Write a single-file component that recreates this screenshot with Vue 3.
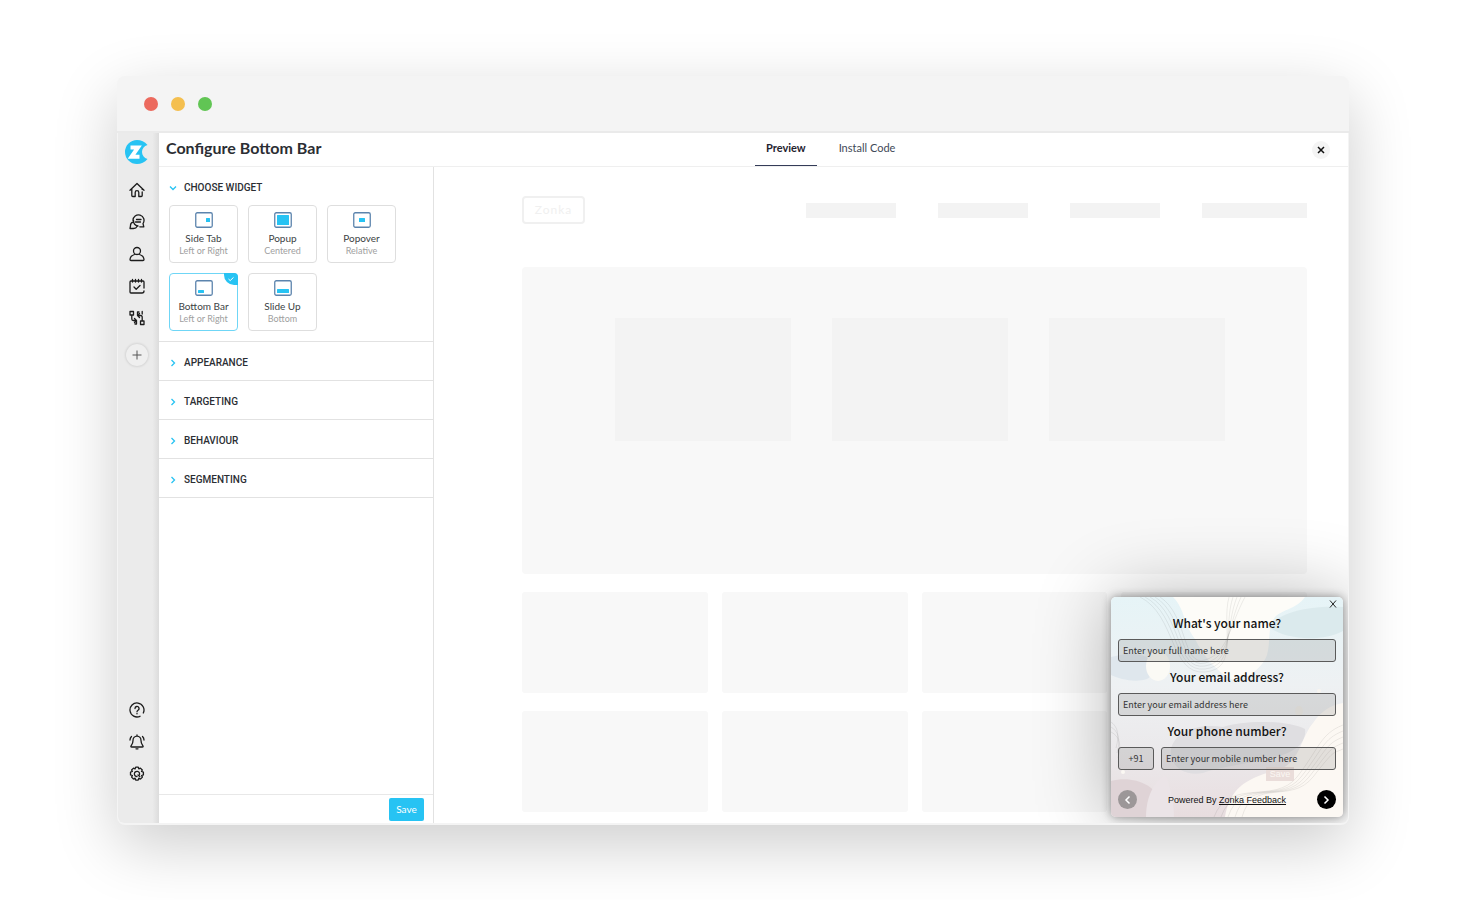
<script setup>
import { ref } from 'vue'

const widgets = [
  { name: 'Side Tab', note: 'Left or Right', box: { x: 11, y: 6, w: 4, h: 4 } },
  { name: 'Popup', note: 'Centered', box: { x: 3, y: 3, w: 12, h: 10 } },
  { name: 'Popover', note: 'Relative', box: { x: 6, y: 6, w: 6, h: 4 } },
  { name: 'Bottom Bar', note: 'Left or Right', box: { x: 3, y: 10, w: 6, h: 3 } },
  { name: 'Slide Up', note: 'Bottom', box: { x: 3, y: 9, w: 12, h: 4 } },
]
const selected = ref('Bottom Bar')
const sections = ['APPEARANCE', 'TARGETING', 'BEHAVIOUR', 'SEGMENTING']

const topIcons = [
  { label: 'Home', d: 'M1 8.200 8 1.500l7 6.700M2.800 7v6.500c0 .7.300 1 1 1h2.400v-4a1.800 1.800 0 0 1 3.600 0v4h2.400c.7 0 1-.3 1-1V10M13.200 7v.5' },
  { label: 'Responses', d: 'M4 6.500A5.500 5.500 0 1 1 14 9.500l.8 3.300h-4M7.500 5.500h4.500M6.500 8h5M4 8.200A3.700 3.700 0 0 0 1.500 12L1 14.500h3.500c1.800 0 3-.8 3.700-2.200M4.500 6.500c0 3 1.500 5 4.500 5.500' },
  { label: 'Contacts', d: 'M8 1.500a3.500 3.500 0 1 1 0 7 3.500 3.500 0 0 1 0-7M5.500 8.500C3 9.300 1.200 11 1 13.500c0 .7.300 1 1 1h12c.7 0 1-.3 1-1-.2-2.500-2-4.200-4.500-5' },
  { label: 'Tasks', d: 'M15 10V4c0-.8-.3-1-1-1H2c-.7 0-1 .3-1 1v10c0 .8.300 1 1 1h11c1.300 0 2-.7 2-2M3.500 1.500v2.500M6.500 1.500v2.500M9.500 1.500v2.500M12.500 1.500v2.500M5 9l2.200 2.200L11 7.500' },
  { label: 'Workflows', d: 'M1 1.500h3.500V5H1zM2.800 5v4c0 1 .5 1.500 1.500 1.500H7M5.500 8.500 7.500 10.500 5.500 12.500M7.500 10.500v3.500H6M11.500 11H15v3.500h-3.500zM13.200 11V7c0-1-.5-1.500-1.500-1.500H9M10.500 3.500 8.500 5.500l2 2M8.500 5.500V2H10M13.200 1.500V4' },
]
const bottomIcons = [
  { label: 'Help', d: 'M11 14.300A7 7 0 1 1 14.300 11M6 6.500a2 2 0 1 1 3 1.700c-.7.400-1 .7-1 1.500M8 11.500v.3' },
  { label: 'Notifications', d: 'M8 1v1M8 2.200c-2.500 0-4 2-4 4.300 0 3-1 4-2 5.500-.4.700 0 1 .7 1h10.600c.7 0 1.100-.3.700-1-1-1.500-2-2.500-2-5.500 0-2.300-1.500-4.300-4-4.300M7 14.800h2M2.500 2.500C1.500 3.500 1 4.500 1 6M13.500 2.500c1 1 1.500 2 1.500 3.500' },
  { label: 'Settings', d: 'M6.700 1.200h2.600l.5 1.700 1.600-.8 1.900 1.900-.8 1.500 1.900.6v2.800l-1.800.6.800 1.600-1.900 1.900-1.700-.8-.6 1.900H6.700l-.6-1.900-1.600.8-1.900-1.900.8-1.600-1.900-.6V6.100l1.900-.6-.8-1.500 1.900-1.900 1.600.8zM10.500 8.500A2.600 2.600 0 1 0 8 10.500M9 9l1.800 1.600' },
]
</script>

<template>
  <div class="page">
    <main class="window">
      <div class="chrome">
        <span class="dot red"></span>
        <span class="dot amber"></span>
        <span class="dot green"></span>
      </div>
      <div class="app">
        <nav class="rail" aria-label="Main">
          <svg class="logo" viewBox="0 0 24 24" aria-label="Zonka">
            <path d="M12 0c4 0 7.800 1.800 10.500 5-3.500 1-5.500 3.800-5.500 7s2 6 5.500 7c-2.700 3.200-6.500 5-10.500 5A12 12 0 0 1 12 0z" fill="#27c3f3" />
            <path d="M5.500 7.500h7.500L6.500 16.800h8" fill="none" stroke="#fff" stroke-width="4" />
          </svg>
          <div class="icons">
            <button v-for="i in topIcons" :key="i.label" class="icon" :aria-label="i.label">
              <svg viewBox="0 0 16 16"><path :d="i.d" /></svg>
            </button>
          </div>
          <button class="add" aria-label="Add">
            <svg viewBox="0 0 10 10"><path d="M5 0.500v9M0.500 5h9" /></svg>
          </button>
          <div class="icons low">
            <button v-for="i in bottomIcons" :key="i.label" class="icon" :aria-label="i.label">
              <svg viewBox="0 0 16 16"><path :d="i.d" /></svg>
            </button>
          </div>
        </nav>
        <div class="work">
          <header class="head">
            <h1>Configure Bottom Bar</h1>
            <div class="tabs">
              <button class="tab on">Preview</button>
              <button class="tab">Install Code</button>
            </div>
            <button class="close" aria-label="Close">
              <svg viewBox="0 0 8 8"><path d="M1 1l6 6M7 1L1 7" /></svg>
            </button>
          </header>
          <div class="split">
            <aside class="panel">
              <section class="choose">
                <button class="toggle open">
                  <svg viewBox="0 0 8 8"><path d="M1 2.500 4 5.500 7 2.500" /></svg>
                  CHOOSE WIDGET
                </button>
                <div class="cards">
                  <button
                    v-for="w in widgets"
                    :key="w.name"
                    class="card"
                    :class="{ picked: w.name === selected }"
                    @click="selected = w.name"
                  >
                    <svg class="glyph" viewBox="0 0 18 16">
                      <rect x="0.750" y="0.750" width="16.500" height="14.500" rx="1.500" fill="#fff" stroke="#5c84ad" stroke-width="1.300" />
                      <rect :x="w.box.x" :y="w.box.y" :width="w.box.w" :height="w.box.h" rx="0.500" fill="#27c3f3" />
                    </svg>
                    <span class="name">{{ w.name }}</span>
                    <span class="note">{{ w.note }}</span>
                    <span v-if="w.name === selected" class="badge">
                      <svg viewBox="0 0 8 8"><path d="M1.500 4 3.200 5.600 6.500 2.400" /></svg>
                    </span>
                  </button>
                </div>
              </section>
              <button v-for="s in sections" :key="s" class="toggle row">
                <svg viewBox="0 0 8 8"><path d="M2.500 1 5.500 4 2.500 7" /></svg>
                {{ s }}
              </button>
              <footer class="foot"><button class="save">Save</button></footer>
            </aside>
            <section class="preview">
              <div class="site-head">
                <span class="site-logo">Zonka</span>
                <div class="links"><i></i><i></i><i></i><i class="wide"></i></div>
              </div>
              <div class="hero"><i></i><i></i><i></i></div>
              <div class="tiles"><i v-for="n in 8" :key="n"></i></div>
            </section>
          </div>
        </div>
        <form class="survey" @submit.prevent>
          <svg class="art" viewBox="0 0 232 220" preserveAspectRatio="none" aria-hidden="true">
            <defs>
              <linearGradient id="wash" x1="0" y1="0" x2="0" y2="1">
                <stop offset="0" stop-color="#e6f4f7" />
                <stop offset="0.400" stop-color="#eef1f3" />
                <stop offset="0.700" stop-color="#ebe9eb" />
                <stop offset="1" stop-color="#e8dddf" />
              </linearGradient>
            </defs>
            <rect width="232" height="220" fill="url(#wash)" />
            <path d="M0 60c10-2 20-6 36 0 6 8 8 18 0 22C24 86 8 82 0 78z" fill="#dfe7ed" />
            <path d="M62 0c12 12 10 26 22 42 10 20 22 32 36 40 12 2 30-8 36-24 4-14 0-28 8-38 8-8 22-8 30-20z" fill="#fdfcf8" />
            <path d="M158 30c8-14 40-22 74-20v24c-22 12-60 8-74-4z" fill="#dbeaed" />
            <ellipse cx="47" cy="69" rx="12" ry="15" fill="#fbfaf5" />
            <path d="M60 152c4-16 24-26 52-22 24-8 66-6 82 2 2 16-14 26-40 30-24 6-46 8-62 14-22 4-34-10-32-24z" fill="#dfdee1" />
            <path d="M0 184c22-6 44 4 50 20l2 16H0z" fill="#dfd3d6" />
            <path d="M35 220c0-20 8-36 20-42 4 12 8 28 8 42z" fill="#ebe4e7" />
            <path d="M114 220c4-24 16-36 42-44 34-4 32-34 46-50 8-12 18-18 30-20v114z" fill="#fcf8f3" />
            <ellipse cx="188" cy="114" rx="4" ry="5" fill="#efede8" />
            <circle cx="208" cy="94" r="2" fill="#f8f5f0" />
            <circle cx="12" cy="175" r="2" fill="#fbf8f3" />
            <g fill="none" stroke="#000" stroke-opacity="0.120" stroke-width="0.600">
              <path v-for="k in 5" :key="'a' + k" :d="`M${24 + k * 5} 0C${62 + k * 3} 18 ${56 + k * 3} ${80 - k * 2} 94 ${78 - k * 3}S${108 + k * 2} 30 ${114 + k * 4} 0`" />
              <path v-for="k in 5" :key="'b' + k" :d="`M${96 + k * 7} 220C${112 + k * 6} 180 ${160 + k * 4} 208 ${182 + k * 4} 180S${206 + k * 3} ${132 + k * 5} 232 ${122 + k * 6}`" />
              <path v-for="k in 3" :key="'c' + k" :d="`M0 ${120 + k * 5}c${5 + k} 4 ${8 + k} 12 ${4 + k} 26`" />
            </g>
          </svg>
          <span class="ghost">Save</span>
          <button type="button" class="dismiss" aria-label="Close survey">
            <svg viewBox="0 0 8 8"><path d="M1 0.500l6 7M7 0.500l-6 7" /></svg>
          </button>
          <label for="full-name">What's your name?</label>
          <input id="full-name" type="text" placeholder="Enter your full name here" />
          <label for="email">Your email address?</label>
          <input id="email" type="email" placeholder="Enter your email address here" />
          <label for="phone">Your phone number?</label>
          <div class="phone">
            <input class="code" type="text" value="+91" aria-label="Country code" />
            <input id="phone" type="tel" placeholder="Enter your mobile number here" />
          </div>
          <div class="pager">
            <button type="button" class="go back" aria-label="Previous">
              <svg viewBox="0 0 10 10"><path d="M6.500 1.500 3 5l3.500 3.500" /></svg>
            </button>
            <p>Powered By <a href="#">Zonka Feedback</a></p>
            <button type="submit" class="go" aria-label="Next">
              <svg viewBox="0 0 10 10"><path d="M3.500 1.500 7 5 3.500 8.500" /></svg>
            </button>
          </div>
        </form>
      </div>
    </main>
  </div>
</template>

<style>
body {
  margin: 0;
  background: #fff;
}
</style>

<style scoped>
* {
  box-sizing: border-box;
}
button {
  border: 0;
  padding: 0;
  margin: 0;
  background: none;
  font: inherit;
  color: inherit;
  cursor: pointer;
}
svg {
  display: block;
}
.page {
  min-height: 100vh;
  display: flex;
  padding: 76px 117px 75px;
  font-family: Lato, sans-serif;
  color: #2b2e33;
  overflow: hidden;
}
.window {
  flex: 1;
  min-width: 0;
  display: flex;
  flex-direction: column;
  border-radius: 8px;
  background: #f4f4f4;
  box-shadow: 0 20px 64px rgba(0, 0, 0, 0.2);
}
.chrome {
  height: 57px;
  display: flex;
  align-items: center;
  gap: 13px;
  padding: 0 27px;
  border-bottom: 2px solid #eaeaea;
}
.dot {
  width: 14px;
  height: 14px;
  border-radius: 50%;
}
.red { background: #ec6a5e; }
.amber { background: #f4bf4f; }
.green { background: #61c554; }
.app {
  position: relative;
  flex: 1;
  display: flex;
  margin: 0 1px 2px;
  border-radius: 0 0 6px 6px;
  background: #fff;
  overflow: hidden;
}
.rail {
  width: 41px;
  display: flex;
  flex-direction: column;
  align-items: center;
  padding: 7px 3px 41px 0;
  background: linear-gradient(90deg, #ebebeb 84%, #dcdcdc);
}
.logo {
  width: 24px;
  height: 24px;
  margin-bottom: 18px;
}
.icons {
  display: flex;
  flex-direction: column;
  gap: 16px;
}
.low {
  margin-top: auto;
}
.icon svg {
  width: 16px;
  height: 16px;
  fill: none;
  stroke: #1c1c1c;
  stroke-width: 1.3;
  stroke-linecap: round;
  stroke-linejoin: round;
}
.add {
  width: 22px;
  height: 22px;
  margin-top: 18px;
  display: grid;
  place-items: center;
  border-radius: 50%;
  background: #efefef;
  box-shadow: 0 0 3px rgba(0, 0, 0, 0.2);
}
.add svg {
  width: 10px;
  height: 10px;
  stroke: #555;
}
.work {
  flex: 1;
  min-width: 0;
  display: flex;
  flex-direction: column;
}
.head {
  height: 34px;
  display: flex;
  align-items: stretch;
  padding: 0 18px 0 7px;
  border-bottom: 1px solid #efefef;
}
.head h1 {
  flex: 0 0 589px;
  margin: 0;
  font-size: 16px;
  line-height: 30px;
  font-weight: 700;
}
.tabs {
  flex: 1;
  display: flex;
  gap: 11px;
}
.tab {
  padding: 0 11px;
  border-bottom: 1px solid transparent;
  font-size: 11px;
  display: flex;
  line-height: 30px;
  color: #3f4957;
}
.tab.on {
  border-color: #343c58;
  font-weight: 700;
  color: #1f2430;
}
.close {
  align-self: center;
  width: 18px;
  height: 18px;
  display: grid;
  place-items: center;
  border-radius: 50%;
  background: #f4f4f4;
}
.close svg {
  width: 8px;
  height: 8px;
  stroke: #111;
  stroke-width: 1.5;
}
.split {
  flex: 1;
  display: flex;
}
.panel {
  flex: 0 0 275px;
  display: flex;
  flex-direction: column;
  border-right: 1px solid #e2e2e2;
}
.choose {
  padding: 8px 10px 10px;
  border-bottom: 1px solid #e2e2e2;
}
.toggle {
  display: flex;
  align-items: center;
  gap: 7px;
  font-family: Roboto, sans-serif;
  font-size: 10px;
  line-height: 14px;
  font-weight: 500;
}
.toggle svg {
  width: 8px;
  height: 8px;
  fill: none;
  stroke: #27c3f3;
  stroke-width: 1.3;
}
.open {
  height: 26px;
}
.row {
  height: 39px;
  padding: 3px 10px 0;
  border-bottom: 1px solid #e2e2e2;
}
.cards {
  display: grid;
  grid-template-columns: repeat(3, 69px);
  gap: 10px;
  margin-top: 4px;
}
.card {
  position: relative;
  height: 58px;
  display: flex;
  flex-direction: column;
  align-items: center;
  border: 1px solid #dedede;
  border-radius: 4px;
}
.picked {
  border-color: #6fd6f6;
}
.glyph {
  width: 18px;
  height: 16px;
  margin: 6px 0 3px;
}
.name {
  font-size: 10px;
  line-height: 14px;
  color: #3c3f44;
}
.note {
  font-size: 9px;
  line-height: 12px;
  color: #a0a0a0;
}
.badge {
  position: absolute;
  top: -1px;
  right: -1px;
  width: 14px;
  height: 12px;
  display: grid;
  place-items: center;
  border-radius: 0 4px 0 10px;
  background: #27c3f3;
}
.badge svg {
  width: 8px;
  height: 8px;
  fill: none;
  stroke: #fff;
}
.foot {
  margin-top: auto;
  display: flex;
  justify-content: flex-end;
  padding: 3px 9px 2px;
  border-top: 1px solid #e8e8e8;
}
.save {
  width: 35px;
  height: 23px;
  padding-bottom: 2px;
  border-radius: 2px;
  background: #27c3f3;
  color: #fff;
  font-size: 10px;
}
.preview {
  flex: 1;
  min-width: 0;
  padding: 29px 41px 10px 88px;
}
.preview i {
  display: block;
}
.site-head {
  display: flex;
  align-items: center;
  justify-content: space-between;
}
.site-logo {
  width: 63px;
  height: 28px;
  border: 2px solid #f0f0f0;
  border-radius: 4px;
  text-align: center;
  font-size: 12px;
  line-height: 24px;
  letter-spacing: 1px;
  color: #f0f0f0;
}
.links {
  display: flex;
  gap: 42px;
}
.links i {
  width: 90px;
  height: 15px;
  background: #f3f3f3;
}
.links .wide {
  width: 105px;
}
.hero {
  display: grid;
  grid-template-columns: repeat(3, 1fr);
  gap: 41px;
  height: 307px;
  margin-top: 43px;
  padding: 51px 82px 133px 93px;
  border-radius: 4px;
  background: #f8f8f8;
}
.hero i {
  background: #f3f3f3;
}
.tiles {
  display: grid;
  grid-template-columns: repeat(4, 1fr);
  gap: 18px 14px;
  margin-top: 18px;
}
.tiles i {
  height: 101px;
  border-radius: 3px;
  background: #f8f8f8;
}
.survey {
  position: absolute;
  right: 5px;
  bottom: 6px;
  width: 232px;
  height: 220px;
  display: flex;
  flex-direction: column;
  padding: 16px 7px 0;
  border-radius: 5px;
  box-shadow: 0 0 10px rgba(0, 0, 0, 0.4), 0 0 76px rgba(0, 0, 0, 0.3);
  font-family: "Noto Sans CJK SC", sans-serif;
  color: #111;
}
.survey > * {
  position: relative;
}
.survey .art {
  position: absolute;
  inset: 0;
  width: 100%;
  height: 100%;
  border-radius: 5px;
}
.survey .ghost {
  position: absolute;
  left: 155px;
  top: 170px;
  width: 28px;
  height: 14px;
  background: #eaddda;
  color: #fbf7f3;
  font: 9px/14px "Liberation Sans", sans-serif;
  text-align: center;
}
.survey .dismiss {
  position: absolute;
  top: 3px;
  right: 6px;
}
.dismiss svg {
  width: 8px;
  height: 8px;
  stroke: #222;
}
.survey label {
  height: 20px;
  margin-bottom: 6px;
  text-align: center;
  font-size: 12px;
  line-height: 20px;
  font-weight: 500;
}
.survey input {
  width: 100%;
  min-width: 0;
  height: 23px;
  margin: 0 0 5px;
  padding: 0 4px;
  border: 1px solid #5a5a5a;
  border-radius: 3px;
  background: rgba(110, 110, 110, 0.18);
  font: 400 9px "Noto Sans CJK SC", sans-serif;
  color: #333;
}
.survey input::placeholder {
  color: #333;
  opacity: 1;
}
.phone {
  display: flex;
  gap: 7px;
}
.survey .code {
  flex: 0 0 36px;
  text-align: center;
}
.pager {
  display: flex;
  align-items: center;
  justify-content: space-between;
  margin-top: 15px;
}
.pager p {
  margin: 0;
  font: 9px "Liberation Sans", sans-serif;
}
.pager a {
  color: inherit;
}
.go {
  width: 19px;
  height: 19px;
  display: grid;
  place-items: center;
  border-radius: 50%;
  background: #000;
}
.go svg {
  width: 10px;
  height: 10px;
  fill: none;
  stroke: #fff;
  stroke-width: 1.5;
}
.back {
  background: #9c9798;
}
</style>
